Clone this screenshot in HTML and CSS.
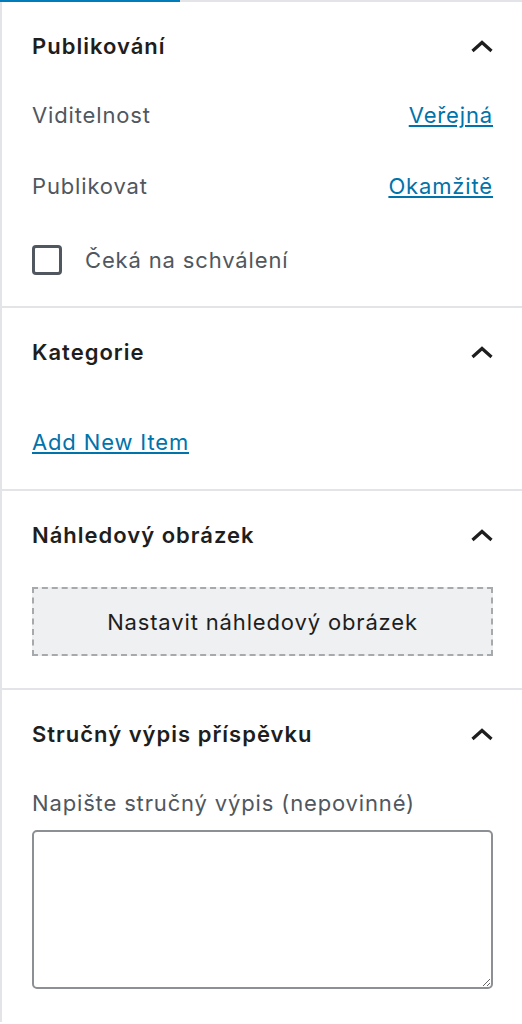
FILE: index.html
```html
<!DOCTYPE html>
<html lang="cs">
<head>
<meta charset="utf-8">
<title>Nastavení příspěvku</title>
<link rel="stylesheet" href="styles.css">
</head>
<body>
<div class="sidebar">
  <div class="tabbar"><div class="tab-indicator"></div></div>

  <section class="panel">
    <div class="panel-header">
      <h2 class="panel-title">Publikování</h2>
      <svg class="chevron" width="24" height="14" viewBox="0 0 24 14" aria-hidden="true"><polyline points="2.5,12 12,3.5 21.5,12" fill="none" stroke="#1e1e1e" stroke-width="3.2"/></svg>
    </div>
    <div class="panel-body publish-body">
      <div class="row"><span class="label">Viditelnost</span><a class="link" href="#">Veřejná</a></div>
      <div class="row"><span class="label">Publikovat</span><a class="link" href="#">Okamžitě</a></div>
      <label class="row check-row"><span class="checkbox"></span><span class="check-label">Čeká na schválení</span></label>
    </div>
  </section>

  <section class="panel">
    <div class="panel-header">
      <h2 class="panel-title">Kategorie</h2>
      <svg class="chevron" width="24" height="14" viewBox="0 0 24 14" aria-hidden="true"><polyline points="2.5,12 12,3.5 21.5,12" fill="none" stroke="#1e1e1e" stroke-width="3.2"/></svg>
    </div>
    <div class="panel-body cat-body">
      <div class="row"><a class="link" href="#">Add New Item</a></div>
    </div>
  </section>

  <section class="panel">
    <div class="panel-header">
      <h2 class="panel-title">Náhledový obrázek</h2>
      <svg class="chevron" width="24" height="14" viewBox="0 0 24 14" aria-hidden="true"><polyline points="2.5,12 12,3.5 21.5,12" fill="none" stroke="#1e1e1e" stroke-width="3.2"/></svg>
    </div>
    <div class="panel-body image-body">
      <button class="image-button" type="button">Nastavit náhledový obrázek</button>
    </div>
  </section>

  <section class="panel last">
    <div class="panel-header">
      <h2 class="panel-title">Stručný výpis příspěvku</h2>
      <svg class="chevron" width="24" height="14" viewBox="0 0 24 14" aria-hidden="true"><polyline points="2.5,12 12,3.5 21.5,12" fill="none" stroke="#1e1e1e" stroke-width="3.2"/></svg>
    </div>
    <div class="panel-body excerpt-body">
      <div class="row"><span class="label">Napište stručný výpis (nepovinné)</span></div>
      <textarea class="excerpt"></textarea>
    </div>
  </section>
</div>
</body>
</html>
```

FILE: styles.css
```css
html, body {
  margin: 0;
  padding: 0;
  background: #fff;
}
body {
  font-family: Inter, "Noto Sans", "Liberation Sans", sans-serif;
  color: #1e1e1e;
}
.sidebar {
  border-left: 2px solid #e2e4e7;
  min-height: 1022px;
}
.tabbar {
  height: 2px;
  background: #e2e4e7;
  margin-left: -2px;
}
.tab-indicator {
  width: 180px;
  height: 2px;
  background: #007cba;
}
.panel {
  border-bottom: 2px solid #e2e4e7;
}
.panel.last {
  border-bottom: none;
}
.panel-header {
  height: 88px;
  display: flex;
  align-items: center;
  justify-content: space-between;
  padding: 0 28px 0 30px;
}
.panel-title {
  margin: 0;
  font-size: 22px;
  font-weight: 600;
  letter-spacing: 1px;
  color: #1e1e1e;
}
.chevron {
  display: block;
}
.panel-body {
  padding: 0 29px 0 30px;
  display: flex;
  flex-direction: column;
}
.row {
  height: 50px;
  display: flex;
  align-items: center;
  justify-content: space-between;
}
.label {
  font-size: 22px;
  letter-spacing: 0.85px;
  color: #50575e;
}
.link {
  font-size: 22px;
  letter-spacing: 0.85px;
  color: #0073aa;
  text-decoration: underline;
  text-decoration-thickness: 2px;
  text-underline-offset: 2px;
}
.publish-body {
  gap: 21px;
  padding-bottom: 21px;
}
.check-row {
  margin-top: 3px;
  justify-content: flex-start;
  gap: 23px;
}
.checkbox {
  width: 24px;
  height: 24px;
  border: 3px solid #50575e;
  border-radius: 4px;
  flex: none;
}
.check-label {
  font-size: 22px;
  letter-spacing: 0.85px;
  color: #50575e;
}
.cat-body {
  padding-top: 21px;
  padding-bottom: 22px;
}
.image-body {
  padding-top: 8px;
  padding-bottom: 32px;
}
.image-button {
  height: 69px;
  background: #eff0f1;
  border: 2px dashed #a7aaad;
  border-radius: 0;
  font-family: inherit;
  font-size: 22px;
  letter-spacing: 0.85px;
  color: #1e1e1e;
  padding: 0;
}
.excerpt-body {
  gap: 2px;
}
.excerpt {
  height: 159px;
  box-sizing: border-box;
  border: 2px solid #8c8f94;
  border-radius: 5px;
  resize: vertical;
  font-family: inherit;
  font-size: 20px;
}
```
